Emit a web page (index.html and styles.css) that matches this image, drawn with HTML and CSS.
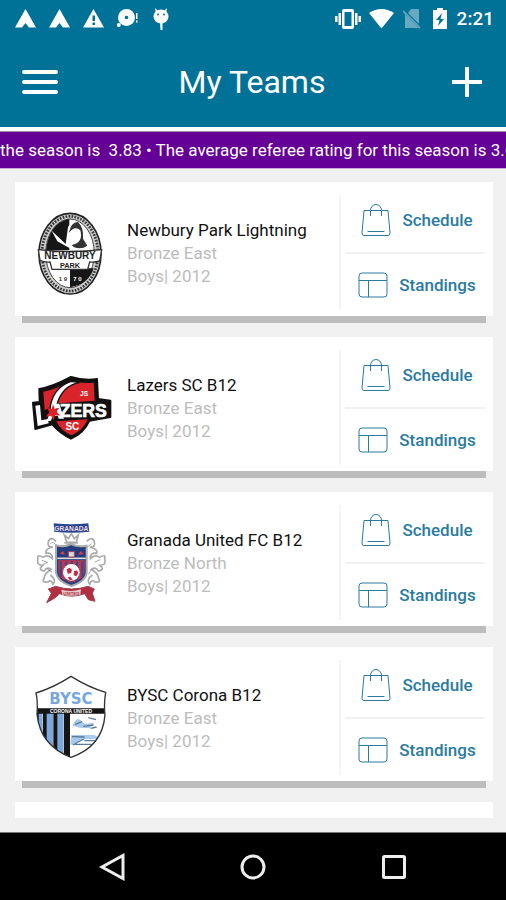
FILE: index.html
```html
<!DOCTYPE html>
<html lang="en">
<head>
    <meta charset="utf-8">
    <meta name="viewport" content="width=device-width, initial-scale=1">
    <title>My Teams</title>
    <link rel="stylesheet" href="styles.css">
</head>
<body>
    <svg class="symbols" aria-hidden="true">
        <symbol id="bag" viewBox="0 0 30 34">
            <path d="M3 7.500H27L29 30Q29 32.500 27 32.500H3Q1 32.500 1 30ZM9.500 13V7.500A5.500 6 0 0 1 20.500 7.500V13M6.500 28.500H23.500"/>
        </symbol>
        <symbol id="table" viewBox="0 0 30 26">
            <rect x="1" y="1" width="28" height="24" rx="3"/>
            <path d="M1 8.500H29M10.500 8.500V25"/>
        </symbol>
        <symbol id="arrow-a" viewBox="0 0 21 19">
            <path d="M10.500 0L21 18.500H14L10.500 14L7 18.500H0Z"/>
        </symbol>
    </svg>

    <div class="status-bar">
        <div class="notifications">
            <svg width="21" height="19"><use href="#arrow-a"/></svg>
            <svg width="21" height="19"><use href="#arrow-a"/></svg>
            <svg width="21" height="19" viewBox="0 0 21 19">
                <path d="M10.500 0L21 18.500H0Z"/>
                <path class="cut" d="M9.500 6.500h2.500v5.500h-2.500zM9.500 13.500h2.500v2.500h-2.500z"/>
            </svg>
            <svg width="21" height="19" viewBox="0 0 21 19">
                <circle cx="9.500" cy="8.500" r="8.500"/>
                <circle class="cut" cx="9.500" cy="8.500" r="1.800"/>
                <circle cx="1.800" cy="16" r="2"/>
                <path d="M19 4h1.500v6H19zM19 11.500h1.500v2H19z"/>
            </svg>
            <svg width="21" height="22" viewBox="0 0 21 22">
                <ellipse cx="10" cy="8.500" rx="7.500" ry="7"/>
                <path d="M4 0L8 4L5 6ZM16 0L12 4L15 6ZM9 14h2.500v8H9.500z"/>
                <circle class="cut" cx="7" cy="6.500" r="1"/>
                <circle class="cut" cx="13" cy="6.500" r="1"/>
            </svg>
        </div>
        <div class="system">
            <svg width="27" height="20" viewBox="0 0 27 20">
                <path fill-rule="evenodd" d="M10 0H18Q20 0 20 2V18Q20 20 18 20H10Q8 20 8 18V2Q8 0 10 0ZM10.500 3V17H17.500V3Z"/>
                <path d="M4.500 4H7v12H4.500zM1 7h2.500v6H1zM21 4h2.500v12H21zM24.500 7H27v6H24.500z"/>
            </svg>
            <svg width="26" height="20" viewBox="0 0 26 20">
                <path d="M0 4Q12.500-4 25 4L12.500 19.500Z"/>
            </svg>
            <svg width="22" height="20" viewBox="0 0 22 20">
                <path opacity=".4" d="M8 0H16V15L5 4ZM2 5L16 19H2Z"/>
                <path class="slash" d="M0 2L17 19"/>
            </svg>
            <svg width="16" height="21" viewBox="0 0 16 21">
                <path d="M4 0H10V2H14V21H0V2H4Z"/>
                <path class="cut" d="M9 5L3 12H6.500L5 18L11 11H7.500Z"/>
            </svg>
            <span class="clock">2:21</span>
        </div>
    </div>

    <header class="header">
        <button class="icon-button" aria-label="Menu">
            <svg width="36" height="26" viewBox="0 0 36 26">
                <path d="M2 3H34M2 13H34M2 23H34"/>
            </svg>
        </button>
        <h1>My Teams</h1>
        <button class="icon-button add" aria-label="Add team">
            <svg width="30" height="30" viewBox="0 0 30 30">
                <path d="M15 0V30M0 15H30"/>
            </svg>
        </button>
    </header>

    <p class="ticker">the season is&nbsp; 3.83 • The average referee rating for this season is 3.6</p>

    <main class="teams">
        <article class="team">
            <svg class="logo" viewBox="21 6 270 300" aria-hidden="true">
                <ellipse cx="150" cy="161" rx="93" ry="121" fill="#ccc" stroke="#222" stroke-width="5"/>
                <ellipse cx="150" cy="161" rx="84" ry="112" fill="none" stroke="#333" stroke-width="8" stroke-dasharray="5 4"/>
                <ellipse cx="150" cy="160" rx="73" ry="103" fill="#fff" stroke="#444" stroke-width="3"/>
                <path d="M148 57Q88 67 78 150H148Z" fill="#161616"/>
                <path d="M150 205H221Q207 253 150 262Z" fill="#161616"/>
                <path d="M95 92L137 132L144 82Q162 46 185 88L205 134Q195 153 162 142L147 143L112 124Z" fill="#fff"/>
                <path d="M146 99Q155 64 174 66Q192 83 189 116L202 137Q184 150 161 141L155 135Q191 129 181 91Q164 75 146 99Z" fill="#333"/>
                <path d="M55 149Q150 160 245 149L239 183Q223 188 209 186L203 208H96L90 186Q70 187 60 181Z" fill="#fff" stroke="#333" stroke-width="4"/>
                <text x="150" y="177" font-size="30" font-weight="bold" text-anchor="middle" fill="#222">NEWBURY</text>
                <text x="150" y="204" font-size="22" font-weight="bold" text-anchor="middle" fill="#222">PARK</text>
                <text x="116" y="243" font-size="18" font-weight="bold" fill="#333">1 9</text>
                <text x="160" y="243" font-size="18" font-weight="bold" fill="#fff">7 0</text>
            </svg>
            <div class="info">
                <h2>Newbury Park Lightning</h2>
                <p>Bronze East</p>
                <p>Boys| 2012</p>
            </div>
            <div class="actions">
                <button><svg width="30" height="34"><use href="#bag"/></svg>Schedule</button>
                <hr>
                <button><svg width="30" height="26"><use href="#table"/></svg>Standings</button>
            </div>
        </article>

        <article class="team">
            <svg class="logo" viewBox="21 -9 270 300" aria-hidden="true">
                <path d="M58 87Q95 82 153 51Q193 63 231 57L234 117L271 122V171L208 182Q192 219 153 236Q119 219 97 193L46 207L39 128L59 126Z" fill="#111" stroke="#111" stroke-width="6" stroke-linejoin="round"/>
                <path d="M70 95Q113 87 151 63Q186 72 221 68L224 122L116 130L74 151Z" fill="#d9242b"/>
                <path d="M109 184L203 178Q190 211 155 226Q122 213 109 184Z" fill="#d9242b"/>
                <path d="M89 155Q94 84 153 64L178 68Q127 77 111 133L107 160Z" fill="#fff" stroke="#111" stroke-width="4"/>
                <path d="M46 137L60 135L64 181L84 177L86 190L53 198Z" fill="#fff"/>
                <path fill-rule="evenodd" d="M80 184L100 131H118L132 176H116L113 167H98L93 182ZM103 155H112L109 143Z" fill="#fff"/>
                <path d="M99 133L104 147L118 143L109 155L122 167L106 165L100 180L93 167L77 170L88 157L81 143L95 147Z" fill="#e11f29"/>
                <text x="119" y="170" font-size="53" font-weight="bold" fill="#fff" stroke="#fff" stroke-width="2">ZERS</text>
                <text x="180" y="108" font-size="20" font-weight="bold" fill="#fff">JS</text>
                <text x="157" y="209" font-size="30" font-weight="bold" text-anchor="middle" fill="#fff">SC</text>
            </svg>
            <div class="info">
                <h2>Lazers SC B12</h2>
                <p>Bronze East</p>
                <p>Boys| 2012</p>
            </div>
            <div class="actions">
                <button><svg width="30" height="34"><use href="#bag"/></svg>Schedule</button>
                <hr>
                <button><svg width="30" height="26"><use href="#table"/></svg>Standings</button>
            </div>
        </article>

        <article class="team">
            <svg class="logo" viewBox="21 6 270 300" aria-hidden="true">
                <path d="M101 40Q153 46 205 40L208 65Q153 71 103 65Z" fill="#28458e"/>
                <text x="154" y="62" font-size="20" font-weight="bold" text-anchor="middle" fill="#eed9e0">GRANADA</text>
                <g fill="none" stroke="#aaa" stroke-width="5">
                    <path d="M133 75L140 97H169L175 75L163 86L154 71L145 86ZM133 99H174"/>
                    <path id="scroll" d="M108 94Q92 77 85 95Q80 112 99 111Q73 117 78 130Q98 127 97 146Q83 131 69 142Q50 130 54 148Q48 166 68 166Q52 180 73 183Q80 169 94 178Q75 188 72 205Q64 219 84 216Q92 205 99 223Q111 210 91 195"/>
                    <use href="#scroll" transform="translate(308 0) scale(-1 1)"/>
                    <path stroke="#777" stroke-width="2" d="M91 101Q99 92 109 107M65 151L83 157L68 164M80 175L96 187M214 101L201 112M224 156L241 149M216 177L205 193"/>
                </g>
                <path d="M108 106Q133 113 153 102Q174 113 200 107V188Q197 215 154 228Q112 215 108 188Z" fill="#263d7d" stroke="#aaa" stroke-width="6"/>
                <path d="M115 151H194V188Q190 208 154 219Q120 210 115 188Z" fill="#ca344a"/>
                <path d="M122 154V202M139 154V214M155 154V219M171 154V214M187 154V202" stroke="#384b88" stroke-width="7"/>
                <path d="M112 145H197" stroke="#ddd" stroke-width="5"/>
                <rect x="145" y="125" width="18" height="16" fill="#ddd" stroke="#a9435d" stroke-width="3"/>
                <path d="M119 131L129 123L135 134ZM175 134L182 123L191 132Z" fill="#df3b50"/>
                <circle cx="154" cy="187" r="25" fill="#fff"/>
                <path d="M140 178l9-5 7 7-3 10-10 1zM162 184l9-3 4 8-6 10-8-3zM143 202l8-2 7 9-9 1z" fill="#c52c44"/>
                <path d="M85 237L107 229Q154 245 204 229L223 237L217 249L225 274L205 269L194 251Q154 266 119 251L103 265L80 278L94 250Z" fill="#b42e42" stroke="#984553" stroke-width="3"/>
                <path d="M124 239Q155 247 183 238L181 254Q154 260 127 254Z" fill="#e7c8ca"/>
                <text x="154" y="254" font-size="13" font-weight="bold" text-anchor="middle" fill="#af3445">UNITED</text>
            </svg>
            <div class="info">
                <h2>Granada United FC B12</h2>
                <p>Bronze North</p>
                <p>Boys| 2012</p>
            </div>
            <div class="actions">
                <button><svg width="30" height="34"><use href="#bag"/></svg>Schedule</button>
                <hr>
                <button><svg width="30" height="26"><use href="#table"/></svg>Standings</button>
            </div>
        </article>

        <article class="team">
            <svg class="logo" viewBox="21 6 270 300" aria-hidden="true">
                <clipPath id="shield">
                    <path d="M48 84Q102 67 153 34Q206 67 257 82Q251 120 255 149Q248 245 153 277Q61 242 51 148Q54 109 48 84Z"/>
                </clipPath>
                <g clip-path="url(#shield)">
                    <path d="M40 30H265V280H40Z" fill="#fff"/>
                    <path d="M48 130H260V146H150V280H48Z" fill="#151515"/>
                    <path d="M56 146H67V280H56ZM80 146H98V280H80ZM112 146H130V280H112Z" fill="#79a9df"/>
                    <path d="M67 146H69V280H67ZM98 146H100V280H98ZM130 146H132V280H130Z" fill="#fff"/>
                    <path d="M157 182Q171 151 184 168L195 177L223 173L209 190L179 188ZM154 210H222L246 222H197L151 240Z" fill="#a9caed"/>
                    <path d="M165 178L186 170M190 184L221 180M205 158L228 164M212 190L230 186M156 215L194 216M193 227H231M158 240L191 222M160 238H215" fill="none" stroke="#597d9f" stroke-width="4"/>
                </g>
                <path d="M48 84Q102 67 153 34Q206 67 257 82Q251 120 255 149Q248 245 153 277Q61 242 51 148Q54 109 48 84Z" fill="none" stroke="#333" stroke-width="4"/>
                <text class="wide" x="153" y="117" font-size="45" text-anchor="middle" fill="#78a7df">BYSC</text>
                <text x="153" y="143" font-size="15" font-weight="bold" text-anchor="middle" fill="#fff">CORONA UNITED</text>
            </svg>
            <div class="info">
                <h2>BYSC Corona B12</h2>
                <p>Bronze East</p>
                <p>Boys| 2012</p>
            </div>
            <div class="actions">
                <button><svg width="30" height="34"><use href="#bag"/></svg>Schedule</button>
                <hr>
                <button><svg width="30" height="26"><use href="#table"/></svg>Standings</button>
            </div>
        </article>

        <article class="team"></article>
    </main>

    <nav class="nav-bar">
        <button aria-label="Back">
            <svg width="28" height="28" viewBox="0 0 28 28"><path d="M25 2.500V25.500L4 14Z"/></svg>
        </button>
        <button aria-label="Home">
            <svg width="28" height="28" viewBox="0 0 28 28"><circle cx="14" cy="14" r="11"/></svg>
        </button>
        <button aria-label="Recent apps">
            <svg width="28" height="28" viewBox="0 0 28 28"><rect x="3.500" y="3.500" width="21" height="21" rx="1"/></svg>
        </button>
    </nav>
</body>
</html>
```
FILE: styles.css
```css
* {
    box-sizing: border-box;
}
body {
    margin: 0;
    height: 100vh;
    display: flex;
    flex-direction: column;
    background-color: #f1f1f1;
    font-family: Roboto, "Liberation Sans", sans-serif;
}
h1, h2, p {
    margin: 0;
    font-weight: normal;
}
button {
    padding: 0;
    border: none;
    background: none;
    font-family: inherit;
    cursor: pointer;
}
svg {
    display: block;
    flex-shrink: 0;
}
.symbols {
    position: absolute;
    width: 0;
    height: 0;
}

/* top bars */
.status-bar {
    display: flex;
    justify-content: space-between;
    align-items: center;
    flex-shrink: 0;
    height: 37px;
    padding: 0 12px 0 15px;
    background-color: #007197;
    color: #fff;
    fill: #fff;
}
.notifications {
    display: flex;
    align-items: center;
    gap: 13px;
}
.system {
    display: flex;
    align-items: center;
    gap: 8px;
}
.cut {
    fill: #007197;
}
.slash {
    stroke: #5ba3bb;
    stroke-width: 2;
}
.clock {
    font-size: 19px;
    font-weight: 500;
}
.header {
    display: grid;
    grid-template-columns: 1fr auto 1fr;
    align-items: center;
    flex-shrink: 0;
    height: 94px;
    padding: 0 24px 0 22px;
    background-color: #007197;
    border-bottom: 4px solid #fff;
    color: #fff;
}
.header h1 {
    font-size: 32px;
    line-height: 40px;
}
.icon-button {
    justify-self: start;
}
.icon-button.add {
    justify-self: end;
}
.icon-button path {
    stroke: #fff;
    stroke-width: 4;
    stroke-linecap: round;
}
.add path {
    stroke-linecap: butt;
}
.ticker {
    flex-shrink: 0;
    height: 38px;
    overflow: hidden;
    white-space: nowrap;
    background-color: #640096;
    border-top: 1px solid #a58ab5;
    border-bottom: 1px solid #c9a9d9;
    color: #fff;
    font-size: 17px;
    line-height: 36px;
}

/* team list */
.teams {
    flex: 1;
    min-height: 0;
    margin: 13px 13px 14px 15px;
    overflow: hidden;
}
.team {
    display: flex;
    position: relative;
    height: 134px;
    margin-bottom: 21px;
    background-color: #fff;
}
.team::after {
    content: "";
    position: absolute;
    top: 100%;
    left: 7px;
    right: 7px;
    height: 7px;
    background-color: #bdbdbd;
}
.logo {
    width: 90px;
    height: 100px;
    margin: 20px 10px 0 12px;
    font-family: "Liberation Sans", sans-serif;
}
.wide {
    font-family: "DejaVu Sans", sans-serif;
    font-weight: bold;
}
.info {
    flex: 1;
    padding-top: 36px;
    font-size: 17px;
    line-height: 23px;
    color: #bcbcbc;
}
.info h2 {
    font-size: 17px;
    line-height: 24px;
    color: #111;
}
.actions {
    display: flex;
    flex-direction: column;
    width: 152px;
    padding-top: 7px;
}
.actions::before {
    content: "";
    position: absolute;
    top: 13px;
    bottom: 6px;
    right: 152px;
    width: 2px;
    background-color: #f5f5f5;
}
.actions button {
    flex: 1;
    display: flex;
    align-items: center;
    justify-content: center;
    gap: 11px;
    font-size: 17px;
    font-weight: 500;
    color: #2b7b9f;
}
.actions svg {
    fill: none;
    stroke: #2b7b9f;
    stroke-width: 1;
}
.actions hr {
    width: 140px;
    height: 2px;
    margin: 0 0 0 4px;
    border: none;
    background-color: #f1f1f1;
}

.nav-bar {
    display: flex;
    justify-content: center;
    align-items: center;
    gap: 113px;
    flex-shrink: 0;
    height: 68px;
    background-color: #000;
    border-top: 1px solid #777;
}
.nav-bar svg {
    fill: none;
    stroke: #eee;
    stroke-width: 3;
}
```
